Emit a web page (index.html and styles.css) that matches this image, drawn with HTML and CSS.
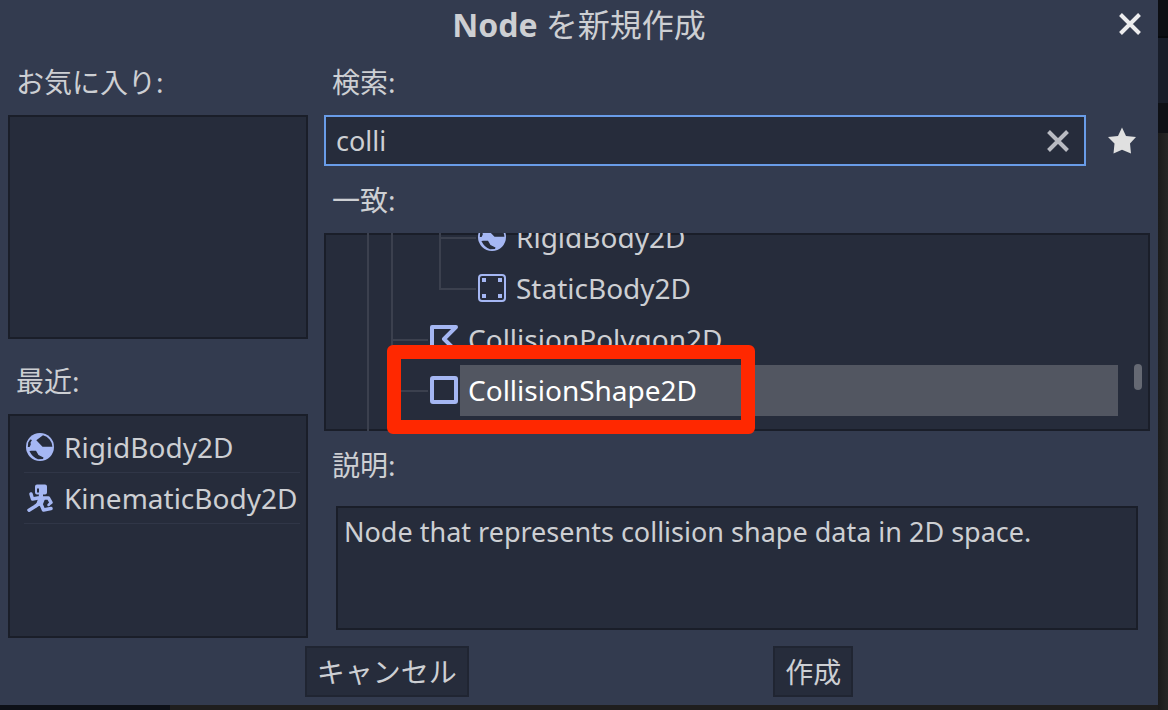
FILE: index.html
```
<!DOCTYPE html>
<html lang="ja">
<head>
  <meta charset="UTF-8" />
  <meta name="viewport" content="width=device-width, initial-scale=1.0" />
  <title>Node を新規作成</title>
  <link rel="stylesheet" href="styles.css">
</head>
<body>
  <svg class="defs" aria-hidden="true">
    <symbol id="icon-rigid" viewBox="0 0 28 28">
      <circle cx="14" cy="14" r="14" fill="#a5b7f3"/>
      <path fill="#262c3b" d="M10.3 7.3 17 2.3A12.4 12.4 0 0 1 26.4 13.8L16.5 13.8ZM2.2 9.5 4.2 6.5 6 7 4.5 9.5 4.8 11.5 3.6 14 1.8 14ZM3.4 18 5.5 17.8 10 17.8 12.5 22 17.5 24.5 17 26 12 26.2Q6.5 24.5 3.4 18Z"/>
    </symbol>
    <symbol id="icon-kinematic" viewBox="0 0 28 28">
      <g fill="none" stroke="#a5b7f3" stroke-width="3.5" stroke-linejoin="round" stroke-linecap="round">
        <path d="M5 10 6.5 15 12 14"/>
        <path d="M14 14 22.5 14 25 18.5"/>
        <path d="M14 19 9 22.5 3 26.2"/>
        <path d="M14.5 19 17.5 26 25 24.5"/>
        <path d="M22.5 21 25 18.5" stroke-width="2.5"/>
      </g>
      <path fill="#a5b7f3" d="M11 .5H19Q21 .5 21 2.5V8.5Q21 10.5 19 10.5H17V13L19 15 17 20 14 22 10 20.5 12 15 13 10.5H11Q9 10.5 9 8.5V2.5Q9 .5 11 .5Z"/>
      <path fill="#262c3b" d="M11 4.5H13V8.5H11Z"/>
    </symbol>
    <symbol id="icon-static" viewBox="0 0 28 28">
      <rect x="1" y="1" width="26" height="26" rx="3" fill="none" stroke="#a5b7f3" stroke-width="2"/>
      <path fill="#a5b7f3" d="M4 4h4v4H4zM20 4h4v4h-4zM4 20h4v4H4zM20 20h4v4h-4z"/>
    </symbol>
    <symbol id="icon-polygon" viewBox="0 0 28 28">
      <path d="M2 2H26L14 14 26 26H2Z" fill="none" stroke="#a5b7f3" stroke-width="4" stroke-linejoin="round"/>
    </symbol>
    <symbol id="icon-shape" viewBox="0 0 28 28">
      <rect x="2" y="2" width="24" height="24" rx="1" fill="none" stroke="#a5b7f3" stroke-width="4"/>
    </symbol>
    <symbol id="icon-close" viewBox="0 0 24 24">
      <path d="M2.5 2.5 21.5 21.5M21.5 2.5 2.5 21.5" fill="none" stroke="currentColor" stroke-width="4"/>
    </symbol>
    <symbol id="icon-star" viewBox="0 0 28 28">
      <path fill="#e0e0e0" d="M14 0.5 18 9 28 10 22 16.5 23 26.5 14 22.8 5.5 26.5 6.5 16.5 0 10 10 9Z"/>
    </symbol>
  </svg>

  <main class="dialog">
    <header class="titlebar">
      <h1><b>Node</b> を新規作成</h1>
      <button type="button" class="icon-button close" aria-label="閉じる"><svg><use href="#icon-close"/></svg></button>
    </header>

    <div class="columns">
      <aside class="sidebar">
        <h2>お気に入り:</h2>
        <div class="panel"></div>
        <h2>最近:</h2>
        <ul class="panel recent">
          <li><svg class="icon"><use href="#icon-rigid"/></svg>RigidBody2D</li>
          <li><svg class="icon"><use href="#icon-kinematic"/></svg>KinematicBody2D</li>
        </ul>
      </aside>

      <section class="content">
        <label for="search">検索:</label>
        <div class="search-row">
          <div class="search-box">
            <input type="text" id="search" value="colli" />
            <button type="button" class="icon-button clear" aria-label="クリア"><svg><use href="#icon-close"/></svg></button>
          </div>
          <button type="button" class="icon-button favorite" aria-label="お気に入り"><svg><use href="#icon-star"/></svg></button>
        </div>

        <h2>一致:</h2>
        <div class="matches">
          <div class="tree">
            <ul class="rows">
              <li><i class="guide"></i><i class="guide wide"></i><i class="elbow"></i><svg class="icon"><use href="#icon-rigid"/></svg><span>RigidBody2D</span></li>
              <li><i class="guide"></i><i class="guide wide"></i><i class="elbow last"></i><svg class="icon"><use href="#icon-static"/></svg><span>StaticBody2D</span></li>
              <li><i class="guide"></i><i class="elbow"></i><svg class="icon"><use href="#icon-polygon"/></svg><span>CollisionPolygon2D</span></li>
              <li class="selected"><i class="guide"></i><i class="elbow last"></i><svg class="icon"><use href="#icon-shape"/></svg><span>CollisionShape2D</span></li>
              <li class="tail"><i class="guide"></i></li>
            </ul>
            <div class="scrollbar"><div class="thumb"></div></div>
          </div>
          <div class="highlight"></div>
        </div>

        <h2>説明:</h2>
        <p class="panel description">Node that represents collision shape data in 2D space.</p>
      </section>
    </div>

    <footer class="actions">
      <button type="button">キャンセル</button>
      <button type="button">作成</button>
    </footer>
  </main>
</body>
</html>
```

FILE: styles.css
```
* {
  box-sizing: border-box;
}
body {
  margin: 0;
  padding: 0 10px 5px 0;
  min-height: 100vh;
  display: flex;
  font-family: "Noto Sans", "Noto Sans CJK JP", sans-serif;
  font-size: 28px;
  line-height: 38px;
  color: #cdcfd3;
  /* editor behind the dialog: dock strip on the right, panel at the bottom */
  background:
    linear-gradient(#0c0e13 36px, #07090c 36px, #07090c 38px, #181d29 38px, #181d29 103px, #0e1015 103px, #0e1015 133px, transparent 133px) right top / 10px 133px no-repeat,
    linear-gradient(#0d1017, #0d1017) left bottom / 170px 5px no-repeat,
    linear-gradient(to left, #262626, #1b1b1b) right top / 10px 100% no-repeat,
    #1f1e1e;
}
h1, h2, p, ul {
  margin: 0;
  padding: 0;
  font-weight: normal;
  font-size: inherit;
}
ul {
  list-style: none;
}
button, input {
  font: inherit;
  color: inherit;
}
.defs {
  display: none;
}
.dialog {
  flex: 1;
  display: flex;
  flex-direction: column;
  min-width: 0;
  background: #333b4f;
}
.titlebar {
  display: grid;
  grid-template-columns: 1fr auto 1fr;
  align-items: center;
  height: 48px;
  padding: 0 16px;
}
.titlebar h1 {
  grid-column: 2;
  padding-top: 2px;
  font-size: 32px;
}
.icon-button {
  display: flex;
  align-items: center;
  justify-content: center;
  padding: 0;
  border: none;
  background: none;
  cursor: pointer;
}
.icon-button svg {
  width: 24px;
  height: 24px;
}
.close {
  justify-self: end;
  color: #ececee;
}
.columns {
  flex: 1;
  display: flex;
  gap: 16px;
  padding: 0 8px;
}
.sidebar, .content {
  display: flex;
  flex-direction: column;
}
.sidebar {
  width: 300px;
  margin-bottom: -8px;
}
.content {
  flex: 1;
  min-width: 0;
}
.columns h2, .columns label {
  margin: 15px 0 14px;
  padding-left: 8px;
}
.sidebar .panel + h2 {
  margin-top: 23px;
}
.panel {
  flex: 1 1 0;
  background: #262c3b;
  border: 2px solid #1a1e29;
}
.recent {
  padding: 0 6px 0 14px;
}
.recent li {
  display: flex;
  align-items: center;
  gap: 10px;
  height: 51px;
  padding-left: 2px;
  border-bottom: 1px solid #303647;
  white-space: nowrap;
}
.recent li:first-child {
  margin-top: 6px;
}
.icon {
  width: 28px;
  height: 28px;
  flex: none;
}
.search-row {
  display: flex;
  gap: 8px;
}
.search-box {
  flex: 1;
  display: flex;
  height: 51px;
  padding-left: 10px;
  background: #262c3b;
  border: 2px solid #699ce8;
}
.search-box input {
  flex: 1;
  min-width: 0;
  padding: 0;
  border: none;
  outline: none;
  background: none;
  font-size: 27px;
}
.clear {
  width: 52px;
  color: #b9bbc2;
}
.favorite {
  width: 56px;
}
.favorite svg {
  width: 28px;
  height: 28px;
}
.matches {
  position: relative;
  flex: 1 1 0;
  display: flex;
  min-height: 0;
}
.tree {
  flex: 1;
  display: flex;
  overflow: hidden;
  background: #262c3b;
  box-shadow: inset 0 0 0 2px #1a1e29;
}
.rows {
  flex: 1;
  display: flex;
  flex-direction: column;
  justify-content: flex-end;
  padding-left: 43px;
}
.rows li {
  display: flex;
  align-items: center;
  flex: none;
  height: 51px;
}
.rows .tail {
  height: 15px;
}
.rows .icon {
  margin-bottom: 2px;
}
.rows span {
  flex: 1;
  margin-left: 2px;
  padding-left: 8px;
  line-height: 51px;
}
.selected span {
  background: #525661;
  color: #fff;
}
.guide {
  width: 24px;
  height: 100%;
  border-left: 2px solid #3b404e;
}
.wide {
  width: 48px;
}
.elbow {
  display: flex;
  flex-direction: column;
  width: 37px;
  height: 100%;
  margin-right: 2px;
}
.elbow::before {
  content: "";
  height: 25px;
  border-left: 2px solid #3b404e;
  border-bottom: 2px solid #3b404e;
}
.elbow::after {
  content: "";
  flex: 1;
  border-left: 2px solid #3b404e;
}
.elbow.last::after {
  border: none;
}
.scrollbar {
  display: flex;
  align-items: flex-end;
  width: 32px;
  padding: 0 8px 41px 16px;
}
.thumb {
  width: 8px;
  height: 26px;
  border-radius: 4px;
  background: #656973;
}
.highlight {
  position: absolute;
  left: 63px;
  bottom: -3px;
  width: 368px;
  height: 89px;
  border: 14px solid #ff2800;
  border-radius: 6px;
}
.description {
  flex: none;
  min-height: 124px;
  margin: 8px 12px 0;
  padding: 5px 6px;
  font-size: 27px;
}
.actions {
  display: flex;
  justify-content: space-evenly;
  padding: 16px 0 8px;
}
.actions button {
  height: 51px;
  padding: 0 10px;
  background: #262c3b;
  border: 2px solid #202532;
  cursor: pointer;
}
```
